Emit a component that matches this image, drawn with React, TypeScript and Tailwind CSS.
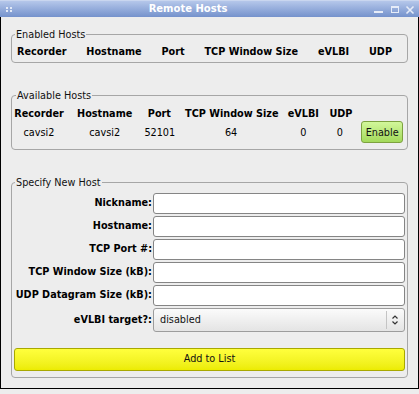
import React from 'react';

const enabledCols = ['Recorder', 'Hostname', 'Port', 'TCP Window Size', 'eVLBI', 'UDP'];

const availableHosts = [
  { recorder: 'cavsi2', hostname: 'cavsi2', port: '52101', tcp: '64', evlbi: '0', udp: '0' },
];

const formFields = [
  'Nickname:',
  'Hostname:',
  'TCP Port #:',
  'TCP Window Size (kB):',
  'UDP Datagram Size (kB):',
];

const App = () => {
  return (
    <div
      className="w-[419px] h-[394px] bg-[#ededed] text-[9.7px] text-black overflow-hidden"
      style={{ fontFamily: '"DejaVu Sans", Verdana, sans-serif' }}
    >
      <div className="h-[389px] flex flex-col">
        {/* Title bar */}
        <div className="h-[17px] flex items-center bg-gradient-to-b from-[#b5c7ea] to-[#7592cc] border-t border-[#c9d6ef]">
          <svg width="17" height="16" viewBox="0 0 17 16" className="shrink-0">
            <rect x="6" y="6" width="2" height="2" fill="#e3eaf7" />
            <rect x="10" y="6" width="2" height="2" fill="#e3eaf7" />
            <rect x="6" y="9" width="2" height="2" fill="#e3eaf7" />
            <rect x="10" y="9" width="2" height="2" fill="#e3eaf7" />
          </svg>
          <div className="flex-1 text-center text-white font-bold text-[10px] leading-none pr-[15px]">
            Remote Hosts
          </div>
          <svg width="45" height="16" viewBox="0 0 45 16" className="shrink-0">
            <rect x="0" y="10" width="9" height="2" fill="#e6ecf8" />
            <rect x="17.5" y="5.5" width="7" height="6" fill="none" stroke="#e6ecf8" strokeWidth="1" />
            <rect x="17" y="5" width="8" height="2" fill="#e6ecf8" />
            <path d="M32.5 5.5 L39.5 12.5 M39.5 5.5 L32.5 12.5" stroke="#e6ecf8" strokeWidth="1.6" />
          </svg>
        </div>

        {/* Body */}
        <div className="flex-1 border-x border-b border-black px-[10px] pt-[11px]">
          {/* Enabled Hosts */}
          <fieldset className="border border-[#a6a6a6] rounded-[4px] px-0 pt-[4px] pb-[4px]">
            <legend className="ml-[3px] px-[1px] leading-[13px] text-[#111]">Enabled Hosts</legend>
            <div className="flex justify-between pl-[5px] pr-[15px] font-bold leading-[13px]">
              {enabledCols.map((c) => (
                <span key={c}>{c}</span>
              ))}
            </div>
          </fieldset>

          {/* Available Hosts */}
          <fieldset className="mt-[26px] border border-[#a6a6a6] rounded-[4px] pl-[1px] pr-0 pt-[5px] pb-[6px]">
            <legend className="ml-[3px] px-[1px] leading-[13px] text-[#111]">Available Hosts</legend>
            <div className="grid grid-cols-[52px_58px_30px_92px_31px_21px_42px] gap-x-[10.7px] gap-y-[1px] items-center text-center leading-[13px]">
              {enabledCols.map((c) => (
                <span key={c} className="font-bold whitespace-nowrap">{c}</span>
              ))}
              <span />
              {availableHosts.map((h) => (
                <React.Fragment key={h.recorder}>
                  <span>{h.recorder}</span>
                  <span>{h.hostname}</span>
                  <span>{h.port}</span>
                  <span>{h.tcp}</span>
                  <span>{h.evlbi}</span>
                  <span>{h.udp}</span>
                  <button className="h-[22px] rounded-[3px] border border-[#7da23f] bg-gradient-to-b from-[#d2f79a] to-[#a3d95a] text-[#111] text-[9.7px]">
                    Enable
                  </button>
                </React.Fragment>
              ))}
            </div>
          </fieldset>

          {/* Specify New Host */}
          <fieldset className="mt-[26px] border border-[#a6a6a6] rounded-[4px] px-0 pt-[4px] pb-[6px]">
            <legend className="ml-[3px] px-[1px] leading-[13px] text-[#111]">Specify New Host</legend>
            <div className="grid grid-cols-[140px_1fr] gap-x-[1px] gap-y-[2px] items-center pr-[2px]">
              {formFields.map((f) => (
                <React.Fragment key={f}>
                  <label className="text-right font-bold whitespace-nowrap">{f}</label>
                  <input
                    type="text"
                    className="h-[21px] bg-white border border-[#858585] rounded-[3px] outline-none px-[4px]"
                  />
                </React.Fragment>
              ))}
              <label className="text-right font-bold whitespace-nowrap">eVLBI target?:</label>
              <div className="h-[24px] flex items-center rounded-[3px] border border-[#9c9c9c] bg-gradient-to-b from-[#fbfbfb] to-[#e4e4e4]">
                <span className="flex-1 pl-[6px] text-[#111]">disabled</span>
                <div className="w-px h-[18px] bg-[#c4c4c4]" />
                <svg width="17" height="14" viewBox="0 0 17 14" className="shrink-0">
                  <path d="M5.5 5.5 L8 3 L10.5 5.5" fill="none" stroke="#333" strokeWidth="1.2" />
                  <path d="M5.5 8.5 L8 11 L10.5 8.5" fill="none" stroke="#333" strokeWidth="1.2" />
                </svg>
              </div>
            </div>
            <div className="mt-[16px] px-[2px]">
              <button className="w-full h-[23px] rounded-[3px] border border-[#a8a800] bg-gradient-to-b from-[#ffff3c] to-[#ecec00] text-[#111] text-[9.7px]">
                Add to List
              </button>
            </div>
          </fieldset>
        </div>
      </div>
    </div>
  );
};

export default App;
